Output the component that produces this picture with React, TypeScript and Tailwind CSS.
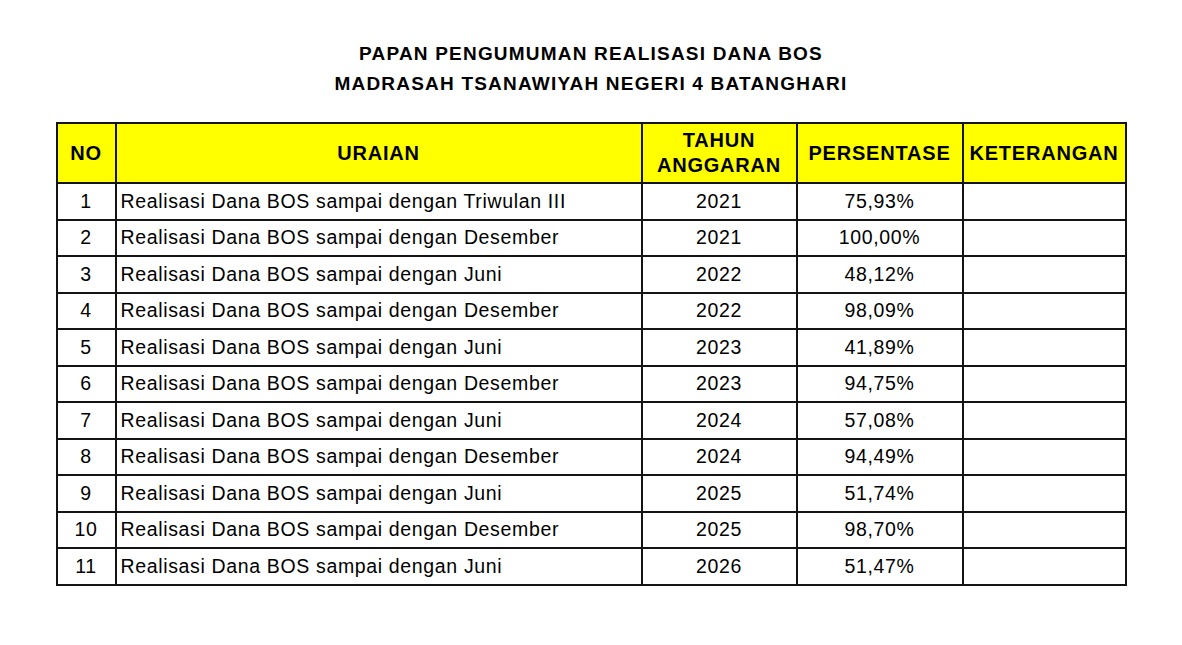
const rows = [
  { no: 1, uraian: "Realisasi Dana BOS sampai dengan Triwulan III", tahun: "2021", persen: "75,93%" },
  { no: 2, uraian: "Realisasi Dana BOS sampai dengan Desember", tahun: "2021", persen: "100,00%" },
  { no: 3, uraian: "Realisasi Dana BOS sampai dengan Juni", tahun: "2022", persen: "48,12%" },
  { no: 4, uraian: "Realisasi Dana BOS sampai dengan Desember", tahun: "2022", persen: "98,09%" },
  { no: 5, uraian: "Realisasi Dana BOS sampai dengan Juni", tahun: "2023", persen: "41,89%" },
  { no: 6, uraian: "Realisasi Dana BOS sampai dengan Desember", tahun: "2023", persen: "94,75%" },
  { no: 7, uraian: "Realisasi Dana BOS sampai dengan Juni", tahun: "2024", persen: "57,08%" },
  { no: 8, uraian: "Realisasi Dana BOS sampai dengan Desember", tahun: "2024", persen: "94,49%" },
  { no: 9, uraian: "Realisasi Dana BOS sampai dengan Juni", tahun: "2025", persen: "51,74%" },
  { no: 10, uraian: "Realisasi Dana BOS sampai dengan Desember", tahun: "2025", persen: "98,70%" },
  { no: 11, uraian: "Realisasi Dana BOS sampai dengan Juni", tahun: "2026", persen: "51,47%" },
]

export default function App() {
  return (
    <div className="w-[1182px] h-[645px] bg-white text-black font-['Liberation_Sans',Arial,sans-serif] pt-[39px]">
      {/* Judul */}
      <div className="text-center font-bold text-[19px] leading-[30px] tracking-[1.2px]">
        <div>PAPAN PENGUMUMAN REALISASI DANA BOS</div>
        <div>MADRASAH TSANAWIYAH NEGERI 4 BATANGHARI</div>
      </div>

      {/* Tabel */}
      <table className="mt-[23px] mx-auto w-[1069px] border-collapse table-fixed">
        <colgroup>
          <col className="w-[59px]" />
          <col className="w-[526px]" />
          <col className="w-[155px]" />
          <col className="w-[166px]" />
          <col className="w-[163px]" />
        </colgroup>
        <thead>
          <tr className="h-[60px] bg-[#ffff00] font-bold text-[20px] leading-[25px] tracking-[0.8px]">
            <th className="border-2 border-[#141414] text-center">NO</th>
            <th className="border-2 border-[#141414] text-center">URAIAN</th>
            <th className="border-2 border-[#141414] text-center">
              TAHUN
              <br />
              ANGGARAN
            </th>
            <th className="border-2 border-[#141414] text-center">PERSENTASE</th>
            <th className="border-2 border-[#141414] text-center">KETERANGAN</th>
          </tr>
        </thead>
        <tbody className="text-[19.5px] tracking-[0.65px]">
          {rows.map((r) => (
            <tr key={r.no} className="h-[36.5px]">
              <td className="border-2 border-[#141414] text-center">{r.no}</td>
              <td className="border-2 border-[#141414] pl-[4px] whitespace-nowrap">{r.uraian}</td>
              <td className="border-2 border-[#141414] text-center">{r.tahun}</td>
              <td className="border-2 border-[#141414] text-center">{r.persen}</td>
              <td className="border-2 border-[#141414]"></td>
            </tr>
          ))}
        </tbody>
      </table>
    </div>
  )
}
